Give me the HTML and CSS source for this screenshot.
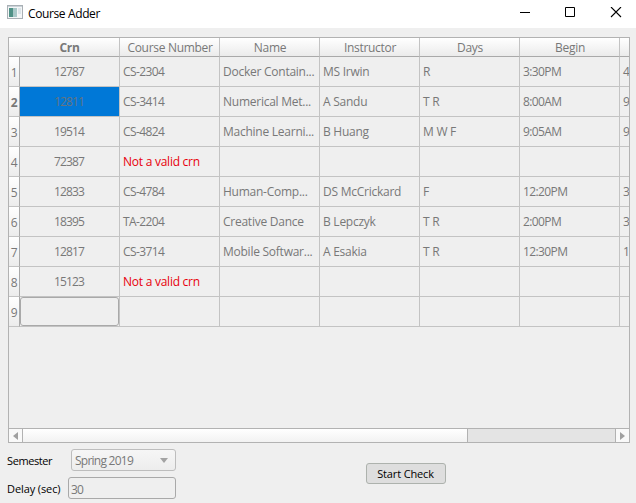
FILE: index.html
```
<!DOCTYPE html>
<html lang="en">
<head>
<meta charset="utf-8">
<title>Course Adder</title>
<link rel="stylesheet" href="styles.css">
</head>
<body>
<header class="titlebar">
  <svg class="app-icon" width="16" height="14" viewBox="0 0 16 14"><rect x=".5" y=".5" width="15" height="13" fill="#f4f6f7" stroke="#a9b0b5"/><path d="M1 1.5h14" stroke="#cbd3d9"/><rect x="2" y="3" width="8" height="9" fill="#a9c8c8"/><rect x="2" y="3" width="4" height="9" fill="#4f9186"/><rect x="11" y="3" width="3" height="6" fill="#dce5e9"/></svg>
  <h1>Course Adder</h1>
  <svg class="controls" width="104" height="12" viewBox="0 0 104 12" fill="none" stroke="#000"><path d="M0 5.500h10M45.500 .500h9v9h-9z"/><path d="M91 0l10 10M101 0L91 10" stroke-width="1.1"/></svg>
</header>
<main>
  <div class="frame">
    <div class="grid">
      <div class="head corner"></div><div class="head first bold">Crn</div><div class="head">Course Number</div><div class="head">Name</div><div class="head">Instructor</div><div class="head">Days</div><div class="head">Begin</div><div class="head"></div>
      <div class="index">1</div><div class="crn">12787</div><div class="code">CS-2304</div><div>Docker Contain...</div><div>MS Irwin</div><div>R</div><div class="time">3:30PM</div><div>4</div>
      <div class="index bold">2</div><div class="crn selected">12811</div><div class="code">CS-3414</div><div>Numerical Met...</div><div>A Sandu</div><div>T R</div><div class="time">8:00AM</div><div>9</div>
      <div class="index">3</div><div class="crn">19514</div><div class="code">CS-4824</div><div>Machine Learni...</div><div>B Huang</div><div>M W F</div><div class="time">9:05AM</div><div>9</div>
      <div class="index">4</div><div class="crn">72387</div><div class="error">Not a valid crn</div><div></div><div></div><div></div><div></div><div></div>
      <div class="index">5</div><div class="crn">12833</div><div class="code">CS-4784</div><div>Human-Comp...</div><div>DS McCrickard</div><div>F</div><div class="time">12:20PM</div><div>3</div>
      <div class="index">6</div><div class="crn">18395</div><div class="code">TA-2204</div><div>Creative Dance</div><div>B Lepczyk</div><div>T R</div><div class="time">2:00PM</div><div>3</div>
      <div class="index">7</div><div class="crn">12817</div><div class="code">CS-3714</div><div>Mobile Softwar...</div><div>A Esakia</div><div>T R</div><div class="time">12:30PM</div><div>1</div>
      <div class="index">8</div><div class="crn">15123</div><div class="error">Not a valid crn</div><div></div><div></div><div></div><div></div><div></div>
      <div class="index">9</div><div class="editor"><span></span></div><div></div><div></div><div></div><div></div><div></div><div></div>
    </div>
    <div class="scrollbar">
      <div class="arrow left"><svg width="5" height="8"><path d="M5 0v8L0 4z" fill="#a0a0a0"/></svg></div>
      <div class="thumb"></div>
      <div class="arrow right"><svg width="5" height="8"><path d="M0 0v8l5-4z" fill="#a0a0a0"/></svg></div>
    </div>
  </div>
  <div class="bottom">
    <div class="form">
      <div class="row"><label>Semester</label><div class="combo"><span>Spring 2019</span><svg width="8" height="5"><path d="M0 0h8L4 5z" fill="#a3a3a3"/></svg></div></div>
      <div class="row"><label class="delay">Delay (sec)</label><div class="input">30</div></div>
    </div>
    <button>Start Check</button>
  </div>
</main>
</body>
</html>
```
FILE: styles.css
```
* { box-sizing: border-box; }
body {
  margin: 0;
  width: 636px;
  height: 503px;
  overflow: hidden;
  background: #efefef;
  color: #000;
  font: 12px/16px "Open Sans", "Noto Sans", sans-serif;
}
.titlebar {
  display: flex;
  height: 28px;
  padding: 5px 12px 0 7px;
  background: #fff;
}
.app-icon { flex: none; }
h1 {
  flex: 1;
  margin: 0 0 0 5px;
  font-size: 12px;
  font-weight: 400;
  line-height: 17px;
  letter-spacing: -.38px;
}
.controls { margin-top: 2px; }
main { padding: 9px 6px 0 8px; }
.frame {
  display: flex;
  flex-direction: column;
  justify-content: space-between;
  width: 622px;
  height: 406px;
  border: 1px solid #b2b2b2;
  overflow: hidden;
}
.grid {
  display: grid;
  grid-template-columns: 11px repeat(7, 100px);
  grid-template-rows: 19px;
  grid-auto-rows: 30px;
  color: #787878;
}
.grid > div {
  padding: 7px 0 0 3px;
  border-right: 1px solid #c3c3c3;
  border-bottom: 1px solid #c3c3c3;
  white-space: nowrap;
  overflow: hidden;
  letter-spacing: -.25px;
}
.grid > .head {
  padding: 2px 0 0 1px;
  border-bottom-color: #a9a9a9;
  background: linear-gradient(#fff, #ebebeb);
  text-align: center;
  letter-spacing: -.3px;
}
.grid > .corner { border-right: 0; }
.grid > .first { padding: 2px 0 0; }
.grid > .index {
  padding: 8px 0 0;
  border-right-color: #a9a9a9;
  background: linear-gradient(#fff, #ececec);
  text-align: center;
}
.grid > .bold { font-weight: 700; }
.grid > .crn { padding: 7px 1px 0 0; text-align: center; letter-spacing: -.85px; }
.grid > .selected { background: #0078d7; color: #66747f; }
.grid > .code { letter-spacing: -.6px; }
.grid > .time { letter-spacing: -.6px; }
.grid > .error { color: #e8000b; }
.grid > .editor { padding: 0; }
.editor span {
  display: block;
  height: 29px;
  border: 1px solid #a9a9a9;
  border-radius: 3px;
}
.scrollbar {
  display: flex;
  height: 14px;
  border-top: 1px solid #b2b2b2;
  background: #e4e4e4;
}
.arrow {
  display: flex;
  align-items: center;
  justify-content: center;
  width: 14px;
  background: #f9f9f9;
}
.left { border-right: 1px solid #b2b2b2; }
.right { margin-left: auto; border-left: 1px solid #b2b2b2; }
.thumb {
  width: 445px;
  border-right: 1px solid #b2b2b2;
  background: linear-gradient(#fff, #f2f2f2);
}
.bottom { display: flex; justify-content: space-between; padding-top: 6px; }
.form { display: grid; gap: 6px; width: 169px; margin-left: -1px; }
.row { display: flex; justify-content: space-between; align-items: center; height: 22px; }
label { padding-top: 1px; font-size: 11px; letter-spacing: -.4px; }
.delay { letter-spacing: -.1px; }
.combo, .input {
  height: 22px;
  border: 1px solid #b2b2b2;
  border-radius: 3px;
  color: #787878;
  line-height: 22px;
}
.combo {
  display: flex;
  justify-content: space-between;
  align-items: center;
  width: 105px;
  padding: 0 7px 0 3px;
  border-color: #bdbdbd;
  background: linear-gradient(#f6f6f6, #ededed);
  letter-spacing: -.75px;
}
.combo span { padding-top: 1px; }
.input { width: 108px; padding: 1px 0 0 2px; letter-spacing: -.85px; border-color: #a9a9a9; }
button {
  width: 80px;
  height: 21px;
  margin: 14px 184px 0 0;
  padding: 0 1px 0 0;
  border: 1px solid #adb2ad;
  border-radius: 3px;
  background: #dedede;
  font: 11px/19px "Open Sans", "Noto Sans", sans-serif;
  letter-spacing: -.15px;
}
```
